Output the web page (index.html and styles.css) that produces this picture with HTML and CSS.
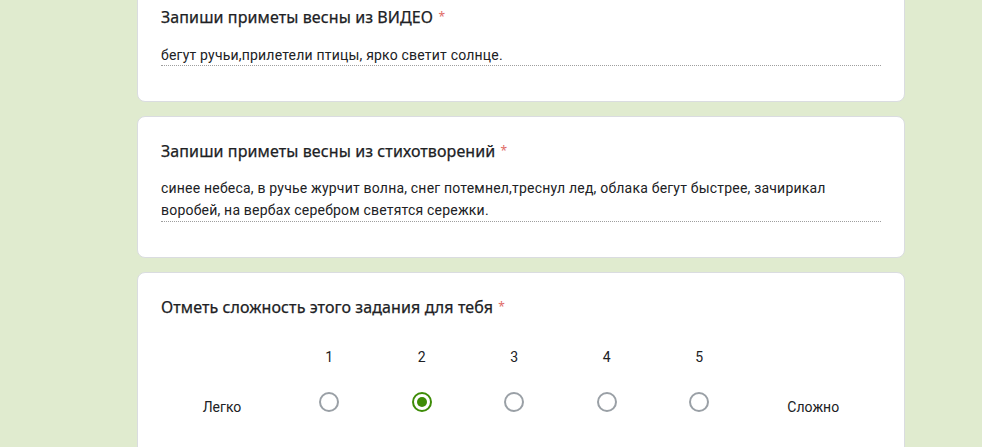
FILE: index.html
```html
<!DOCTYPE html>
<html lang="ru">
<head>
<meta charset="utf-8">
<title>Форма</title>
<link rel="stylesheet" href="styles.css">
</head>
<body>
<main class="form">
  <section class="card card-first">
    <h2 class="q-title">Запиши приметы весны из ВИДЕО <span class="req">*</span></h2>
    <div class="answer answer-short">бегут ручьи,прилетели птицы, ярко светит солнце.</div>
  </section>

  <section class="card">
    <h2 class="q-title">Запиши приметы весны из стихотворений <span class="req">*</span></h2>
    <div class="answer answer-long">синее небеса, в ручье журчит волна, снег потемнел,треснул лед, облака бегут быстрее, зачирикал воробей, на вербах серебром светятся сережки.</div>
  </section>

  <section class="card card-last">
    <h2 class="q-title">Отметь сложность этого задания для тебя <span class="req">*</span></h2>
    <div class="scale">
      <div class="num"></div>
      <div class="num">1</div>
      <div class="num">2</div>
      <div class="num">3</div>
      <div class="num">4</div>
      <div class="num">5</div>
      <div class="num"></div>

      <div class="end-label">Легко</div>
      <div class="cell"><span class="radio"></span></div>
      <div class="cell"><span class="radio checked"></span></div>
      <div class="cell"><span class="radio"></span></div>
      <div class="cell"><span class="radio"></span></div>
      <div class="cell"><span class="radio"></span></div>
      <div class="end-label">Сложно</div>
    </div>
  </section>
</main>
</body>
</html>
```
FILE: styles.css
```css
html, body {
  margin: 0;
  padding: 0;
}
body {
  background: #e0ebcf;
  font-family: Roboto, "Liberation Sans", Arial, sans-serif;
  color: #202124;
  overflow: hidden;
}
.form {
  width: 768px;
  margin-left: 137px;
  margin-top: -18px;
  display: flex;
  flex-direction: column;
  gap: 14px;
}
.card {
  box-sizing: border-box;
  background: #ffffff;
  border: 1px solid #dadce0;
  border-radius: 8px;
  padding: 22px 23px 35px 23px;
}
.q-title {
  margin: 0;
  font-family: "Noto Sans", "Open Sans", sans-serif;
  font-weight: 400;
  font-size: 16px;
  line-height: 24px;
  color: #202124;
  letter-spacing: 0.1px;
  -webkit-text-stroke: 0.25px #202124;
}
.req {
  color: #e06a66;
  font-size: 12px;
  margin-left: 1px;
  vertical-align: 2px;
  -webkit-text-stroke: 0;
}
.answer {
  font-family: Roboto, "Liberation Sans", sans-serif;
  font-size: 14px;
  letter-spacing: 0.2px;
  color: #202124;
  border-bottom: 1px dotted #9e9e9e;
}
.answer-short {
  margin-top: 16px;
  line-height: 20px;
}
.answer-long {
  margin-top: 14px;
  line-height: 22px;
}
.card-last {
  padding-bottom: 60px;
}
.scale {
  margin-top: 28px;
  display: grid;
  grid-template-columns: 122px repeat(5, 92.5px) 1fr;
  font-size: 14px;
  color: #202124;
}
.num {
  text-align: center;
  line-height: 20px;
}
.cell {
  display: flex;
  justify-content: center;
  padding-top: 25px;
}
.end-label {
  text-align: center;
  line-height: 20px;
  padding-top: 30px;
}
.radio {
  box-sizing: border-box;
  display: flex;
  align-items: center;
  justify-content: center;
  width: 20px;
  height: 20px;
  border: 2px solid #9aa0a6;
  border-radius: 50%;
}
.radio.checked {
  border-color: #3e8c07;
}
.radio.checked::after {
  content: "";
  width: 10px;
  height: 10px;
  border-radius: 50%;
  background: #3e8c07;
}
```
